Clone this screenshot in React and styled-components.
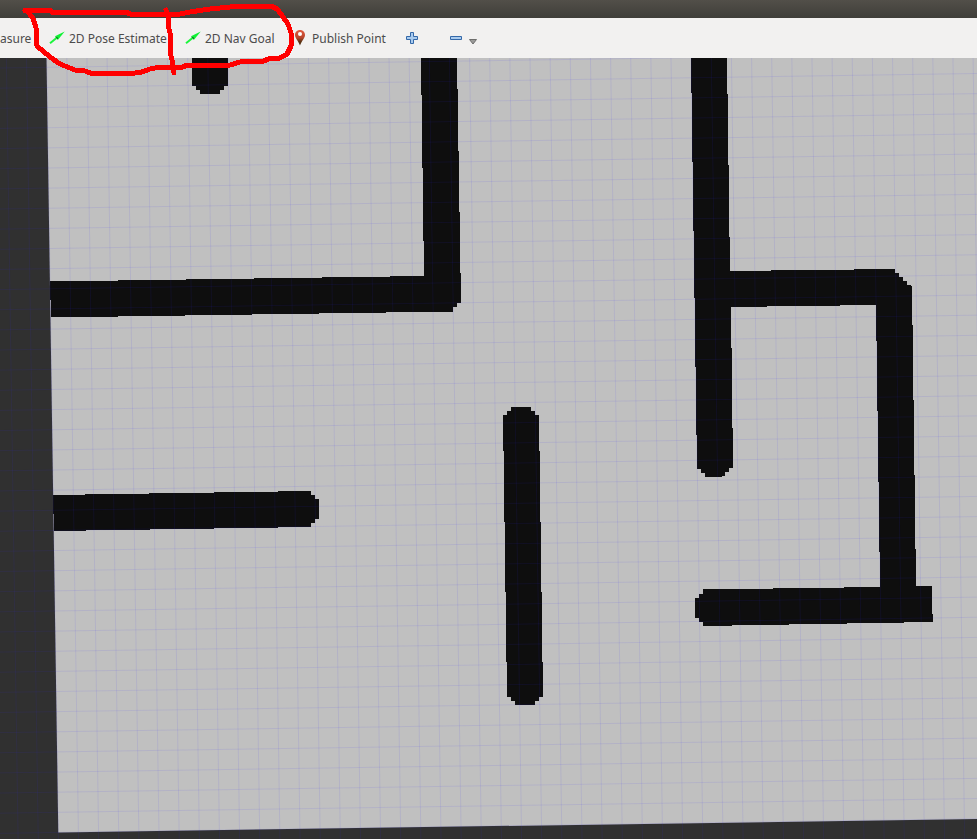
import React from "react";
import styled, { createGlobalStyle } from "styled-components";

const GlobalStyle = createGlobalStyle`
  * { box-sizing: border-box; }
  body { margin: 0; background: #303030; }
`;

const Window = styled.div`
  position: relative;
  display: flex;
  flex-direction: column;
  height: 100vh;
  overflow: hidden;
  font-family: "Noto Sans", sans-serif;
`;

const TitleBar = styled.header`
  flex: none;
  height: 18px;
  background: linear-gradient(#524f49, #3f3e39);
`;

const Toolbar = styled.nav`
  flex: none;
  display: flex;
  align-items: center;
  height: 40px;
  background: #f2f1f0;
`;

const ToolButton = styled.button`
  flex: none;
  display: flex;
  align-items: center;
  gap: ${(p) => p.$gap ?? 4}px;
  width: ${(p) => p.$width}px;
  height: 32px;
  padding: 0 0 0 ${(p) => p.$inset ?? 0}px;
  border: 0;
  background: transparent;
  color: #4c4c4c;
  font: 12px/16px "Noto Sans", sans-serif;
  white-space: nowrap;
`;

const Label = styled.span`
  padding-top: 2px;
`;

const Icon = styled.svg`
  flex: none;
  display: block;
`;

const Viewport = styled.main`
  flex: 1;
  min-height: 0;
  background: #303030;
`;

const MapDrawing = styled.svg`
  display: block;
  width: 100%;
  height: 100%;
`;

const Annotation = styled.svg`
  position: absolute;
  top: 0;
  left: 0;
  pointer-events: none;
`;

const ArrowIcon = () => (
  <Icon width="16" height="16" viewBox="0 0 16 16" aria-hidden="true">
    <path d="M1 13.200 7.500 8" stroke="#1cf53c" strokeWidth="2" />
    <path d="M15.700 1.600 6 6.200 9 9.800Z" fill="#10f234" />
    <path d="M6.200 6.800 9 9.800 8.800 7.600Z" fill="#0b6a1a" />
  </Icon>
);

const PinIcon = () => (
  <Icon width="12" height="18" viewBox="0 0 12 18" aria-hidden="true">
    <defs>
      <linearGradient id="pin" x1="0" y1="0" x2="0" y2="1">
        <stop offset="0" stopColor="#e2593f" />
        <stop offset="0.5" stopColor="#b8452c" />
        <stop offset="0.75" stopColor="#5c3312" />
        <stop offset="1" stopColor="#4a2a10" />
      </linearGradient>
    </defs>
    <path d="M6 1C3 1 1 3.200 1 6c0 3 3.500 6 5 10.500 1.500-4.500 5-7.500 5-10.500 0-2.800-2-5-5-5Z" fill="url(#pin)" />
    <circle cx="6" cy="5" r="2" fill="#fff" />
  </Icon>
);

const PlusIcon = () => (
  <Icon width="14" height="14" viewBox="0 0 14 14" aria-hidden="true">
    <path d="M5.500 1.500h3v4h4v3h-4v4h-3v-4h-4v-3h4Z" fill="#a9cbee" stroke="#3468a8" />
  </Icon>
);

const MinusIcon = () => (
  <Icon width="14" height="14" viewBox="0 0 14 14" aria-hidden="true">
    <path d="M1.500 5.500h11v3h-11Z" fill="#a9cbee" stroke="#3468a8" />
  </Icon>
);

const CaretIcon = () => (
  <Icon width="8" height="14" viewBox="0 0 8 14" aria-hidden="true">
    <path d="M0.500 8.500h7l-3.500 4.500Z" fill="#9a9a98" stroke="#6e6e6c" />
  </Icon>
);

const CELL = 20.14;
const TILT = 0.015;
const ORIGIN = { x: 76.3, y: 691.2 };

const gridLines = [];
for (let i = -6; i <= 48; i += 1) {
  const x = ORIGIN.x + i * CELL;
  gridLines.push(`M${x + TILT * (50 - ORIGIN.y)} 50L${x + TILT * (850 - ORIGIN.y)} 850`);
}
for (let j = -33; j <= 9; j += 1) {
  const y = ORIGIN.y + j * CELL;
  gridLines.push(`M-10 ${y + TILT * (ORIGIN.x + 10)}L990 ${y - TILT * (990 - ORIGIN.x)}`);
}

const walls = [
  "M192 58V86H196V90H200V94H220V90H224V86H228V58Z",
  "M421 58 424 276 50 281.500 51 317.500 453 311.500V307H457V303H461L457 58Z",
  "M53 495 311 491V495H315V499H319V519H315V523H311V527L54 531Z",
  "M511 407H531V411H535V415H539L543 697H539V701H535V705H515V701H511V697H507L503 415H507V411H511Z",
  "M691 58 697 469H701V473H705V477H722V476H725V472H729V468H733L731 307 876 305 880 587 703 589.500V594H699V598H695V618H699V622H703V626L933 622V614H932V586H916L912 287 911 285H907V281H903V277H899V273H895V269L730 271 727 58Z",
];

const OccupancyMap = () => (
  <MapDrawing viewBox="0 58 977 781" preserveAspectRatio="xMinYMin slice" role="img" aria-label="Map">
    <path d="M46.500 58 58.300 832.500 977 819V58Z" fill="#c0c0c0" />
    <g fill="#0e0e0e" shapeRendering="crispEdges">
      {walls.map((d) => (
        <path key={d} d={d} />
      ))}
    </g>
    <path d={gridLines.join("")} fill="none" stroke="#3a28ff" strokeOpacity="0.09" />
  </MapDrawing>
);

export default function App() {
  return (
    <Window>
      <GlobalStyle />
      <TitleBar />
      <Toolbar aria-label="Tools">
        <ToolButton $width={29}><Label>asure</Label></ToolButton>
        <ToolButton $width={136} $inset={20}><ArrowIcon /><Label>2D Pose Estimate</Label></ToolButton>
        <ToolButton $width={129} $inset={20}><ArrowIcon /><Label>2D Nav Goal</Label></ToolButton>
        <ToolButton $width={90} $gap={6}><PinIcon /><Label>Publish Point</Label></ToolButton>
        <ToolButton $width={56} $inset={21} aria-label="Add tool"><PlusIcon /></ToolButton>
        <ToolButton $width={40} $inset={9} $gap={6} aria-label="Remove tool"><MinusIcon /><CaretIcon /></ToolButton>
      </Toolbar>
      <Viewport>
        <OccupancyMap />
      </Viewport>
      <Annotation width="300" height="80" viewBox="0 0 300 80" aria-hidden="true">
        <g fill="none" stroke="#f00" strokeWidth="5" strokeLinecap="round" strokeLinejoin="round" shapeRendering="crispEdges">
          <path d="M25 10.500H50L53 12.500H127L130 14H180L190 12 210 9 240 6H271L277 9 283 17 288 24 291 33V46L287 54 280 58 268 59 264 61 240 62 230 65H187L183 67H160L150 69 140 72.500 130 73.500H92L85 71 75 70 60 64 50 57 37 46 36 28 33 18 27 11" />
          <path d="M166 10 168 15V25L170 33V52L172 60 174 73" />
        </g>
      </Annotation>
    </Window>
  );
}
